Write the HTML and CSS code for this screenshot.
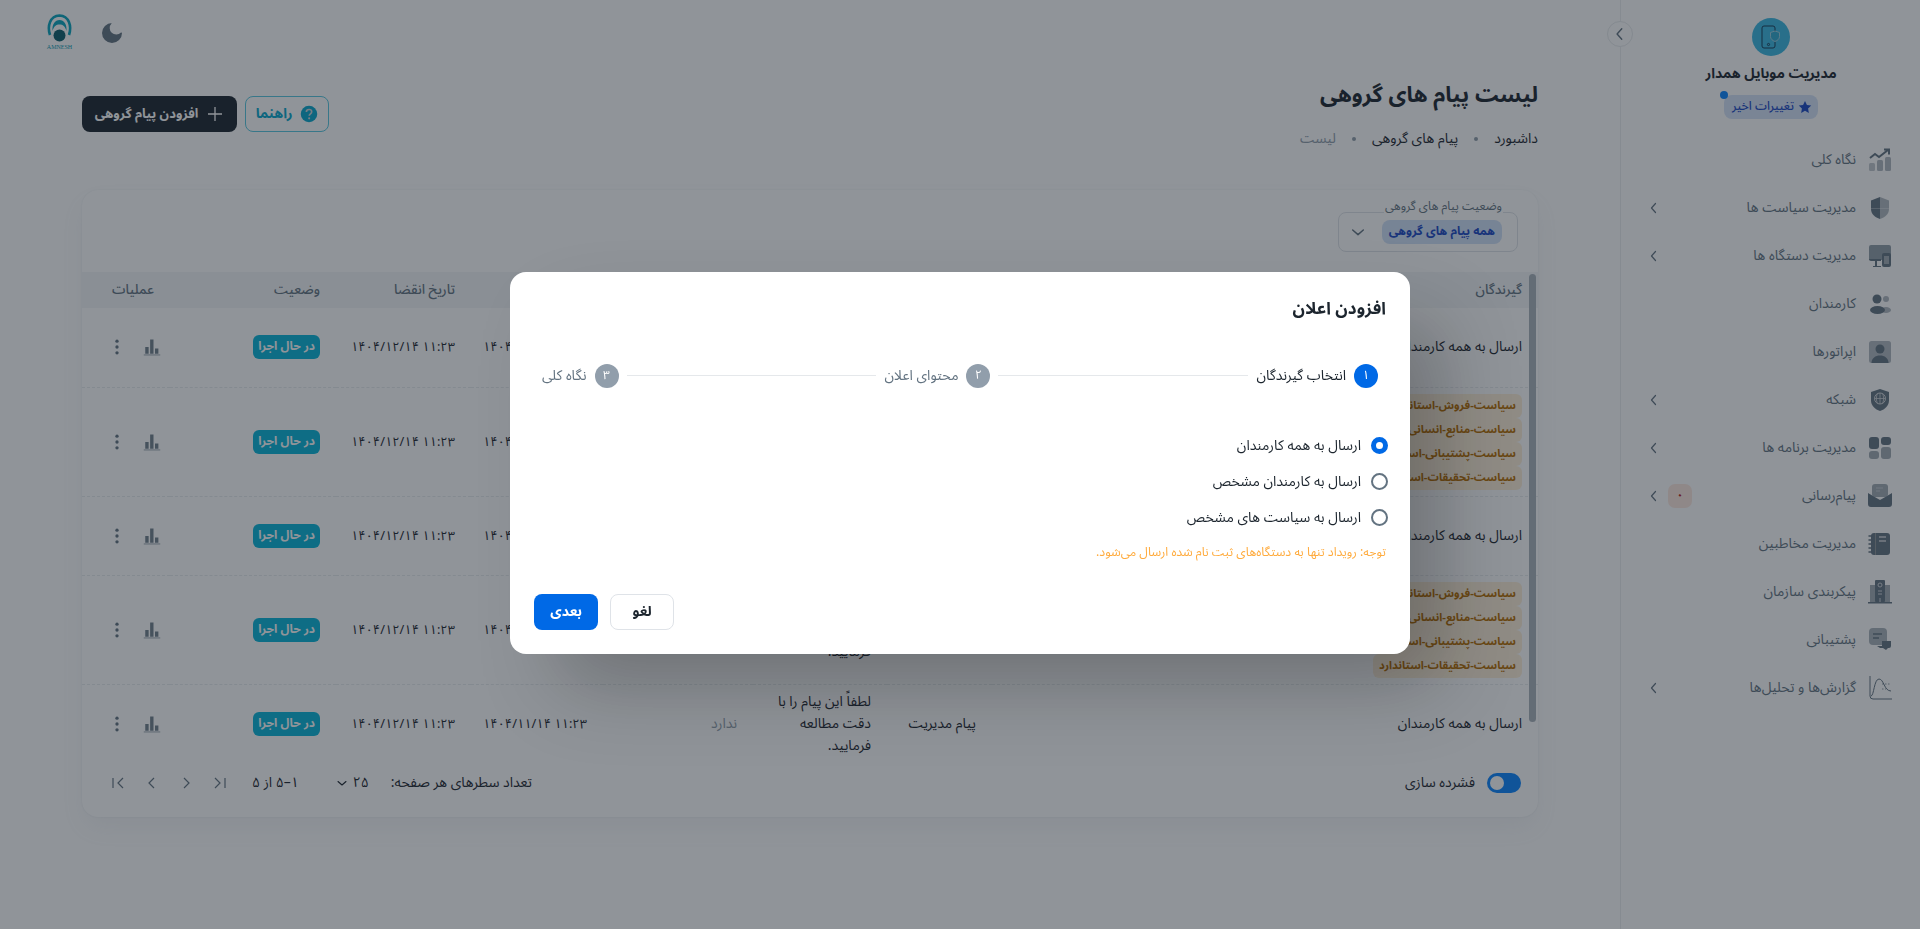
FILE: index.html
```html
<!DOCTYPE html>
<html lang="fa" dir="rtl">
<head>
<meta charset="utf-8">
<title>لیست پیام های گروهی</title>
<link rel="stylesheet" href="styles.css">
</head>
<body>
<svg class="sprite" width="0" height="0" aria-hidden="true">
  <symbol id="i-bars" viewBox="0 0 24 24"><path d="M3 21V12h4.500v9zM9.500 21V2h4.500v19zM16 21v-7h4.500v7z" fill="currentColor" opacity=".9"/><path d="M1 22h22v1.200H1z" fill="currentColor" opacity=".7"/></symbol>
  <symbol id="i-dots" viewBox="0 0 24 24"><circle cx="12" cy="5" r="2" fill="currentColor"/><circle cx="12" cy="12" r="2" fill="currentColor"/><circle cx="12" cy="19" r="2" fill="currentColor"/></symbol>
  <symbol id="i-left" viewBox="0 0 12 12"><path d="M7.500 1.500 3.500 6l4 4.500" fill="none" stroke="currentColor" stroke-width="1.200" stroke-linecap="round" stroke-linejoin="round"/></symbol>
  <symbol id="i-down" viewBox="0 0 12 12"><path d="M2 4.500 6 8l4-3.500" fill="none" stroke="currentColor" stroke-width="1.100" stroke-linecap="round" stroke-linejoin="round"/></symbol>
</svg>

<div class="app">
  <aside class="sidebar">
    <button class="collapse" type="button" aria-label="بستن"><svg width="14" height="14"><use href="#i-left"/></svg></button>
    <div class="brand">
      <div class="brand-icon">
        <svg width="24" height="24" viewBox="0 0 24 24" fill="none">
          <rect x="3" y="1" width="13" height="22" rx="2" stroke="#163b57" stroke-width="1"/>
          <circle cx="9.500" cy="19.500" r="1.100" stroke="#163b57"/>
          <path d="M16 6l4.500 1.500v4c0 2.500-2 4-4.500 5-2.500-1-4.500-2.500-4.500-5v-4z" fill="#2fa9d0" stroke="#9ccfe0" stroke-width="1"/>
        </svg>
      </div>
      <div class="brand-name">مدیریت موبایل همدار</div>
      <div class="brand-badge">
        <span class="brand-dot"></span>
        <svg width="14" height="14" viewBox="0 0 24 24"><path d="M12 1.500l3.300 6.900 7.400 1-5.400 5.200 1.300 7.500-6.600-3.600-6.600 3.600 1.300-7.500L1.300 9.400l7.400-1z" fill="currentColor"/></svg>
        <span>تغییرات اخیر</span>
      </div>
    </div>
    <nav class="menu">
      <a class="item"><svg class="ico" viewBox="0 0 24 24"><rect x="1" y="15" width="6" height="8" rx="1.500" fill="currentColor" opacity=".4"/><rect x="9" y="12" width="6" height="11" rx="1.500" fill="currentColor" opacity=".5"/><rect x="17" y="9" width="6" height="14" rx="1.500" fill="currentColor" opacity=".5"/><path d="M2 10l5-4 4 3 9-7M16 1.500h5v5" fill="none" stroke="currentColor" stroke-width="2"/></svg><span class="lbl">نگاه کلی</span></a>
      <a class="item"><svg class="ico" viewBox="0 0 24 24"><path d="M12 1 3 4.500V13c0 5 4 8.500 9 10z" fill="currentColor"/><path d="M12 1l9 3.500V13c0 5-4 8.500-9 10z" fill="currentColor" opacity=".5"/><path d="M3 12h18v1H3z" fill="#fff" opacity=".3"/></svg><span class="lbl">مدیریت سیاست ها</span><svg class="chev"><use href="#i-left"/></svg></a>
      <a class="item"><svg class="ico" viewBox="0 0 24 24"><path d="M3 1h18a2 2 0 0 1 2 2v9h-8v4H1V3a2 2 0 0 1 2-2z" fill="currentColor" opacity=".7"/><path d="M1 15h12v2H9v5h4v1H5v-1h2v-5H3a2 2 0 0 1-2-2z" fill="currentColor"/><rect x="14" y="9" width="9" height="14" rx="2" fill="currentColor"/><rect x="16" y="12" width="5" height="8" fill="#fff" opacity=".4"/></svg><span class="lbl">مدیریت دستگاه ها</span><svg class="chev"><use href="#i-left"/></svg></a>
      <a class="item"><svg class="ico" viewBox="0 0 24 24"><circle cx="9" cy="7" r="4.500" fill="currentColor"/><ellipse cx="9.500" cy="18" rx="7.500" ry="4" fill="currentColor"/><circle cx="18" cy="7" r="3" fill="currentColor" opacity=".5"/><ellipse cx="18" cy="18" rx="5" ry="3" fill="currentColor" opacity=".5"/></svg><span class="lbl">کارمندان</span></a>
      <a class="item"><svg class="ico" viewBox="0 0 24 24"><rect x="1" y="1" width="22" height="22" rx="2.500" fill="currentColor" opacity=".5"/><circle cx="12" cy="9" r="4.500" fill="currentColor"/><path d="M3.500 23c0-5 4-7.500 8.500-7.500s8.500 2.500 8.500 7.500z" fill="currentColor"/></svg><span class="lbl">اپراتورها</span></a>
      <a class="item"><svg class="ico" viewBox="0 0 24 24"><path d="M12 1l9 3v8.500c0 5-4 9-9 10.500-5-1.500-9-5.500-9-10.500V4z" fill="currentColor"/><circle cx="12" cy="10.500" r="5.500" fill="none" stroke="#cfd3d7" stroke-width="1"/><path d="M6.500 10.500h11M12 5v11M9.500 5.500c-1.500 3-1.500 7 0 10M14.500 5.500c1.500 3 1.500 7 0 10" fill="none" stroke="#cfd3d7" stroke-width=".8"/></svg><span class="lbl">شبکه</span><svg class="chev"><use href="#i-left"/></svg></a>
      <a class="item"><svg class="ico" viewBox="0 0 24 24"><rect x="1" y="1" width="10" height="12" rx="3" fill="currentColor"/><rect x="13" y="1" width="10" height="8" rx="3" fill="currentColor"/><rect x="1" y="15" width="10" height="8" rx="3" fill="currentColor" opacity=".6"/><rect x="13" y="11" width="10" height="12" rx="3" fill="currentColor" opacity=".6"/></svg><span class="lbl">مدیریت برنامه ها</span><svg class="chev"><use href="#i-left"/></svg></a>
      <a class="item"><svg class="ico" viewBox="0 0 24 24"><rect x="4" y="0" width="16" height="13" rx="3" fill="currentColor" opacity=".6"/><path d="M0 9l5 3v0l7 4 7-4 5-3v11a3 3 0 0 1-3 3H3a3 3 0 0 1-3-3z" fill="currentColor"/><path d="M8 4h7M8 7h4" stroke="#fff" stroke-opacity=".4"/></svg><span class="lbl">پیام‌رسانی</span><span class="count">۰</span><svg class="chev"><use href="#i-left"/></svg></a>
      <a class="item"><svg class="ico" viewBox="0 0 24 24"><rect x="3" y="1" width="19" height="22" rx="3" fill="currentColor"/><path d="M11 5h7M11 9h7" stroke="#cfd3d7" stroke-width="1.500"/><path d="M1 4h4M1 8h4M1 12h4M1 16h4M1 20h4" stroke="currentColor" stroke-width="1.500" stroke-linecap="round"/><path d="M7.500 1v22" stroke="#8f9498"/></svg><span class="lbl">مدیریت مخاطبین</span></a>
      <a class="item"><svg class="ico" viewBox="0 0 24 24"><rect x="7" y="0" width="10" height="22" rx="1" fill="currentColor"/><rect x="2" y="5" width="6" height="17" fill="currentColor" opacity=".6"/><rect x="16" y="5" width="6" height="17" fill="currentColor" opacity=".6"/><rect x="0" y="22" width="24" height="1.500" fill="currentColor"/><circle cx="12" cy="5" r="2" fill="none" stroke="#cfd3d7"/><path d="M10 11h4M10 14h4M12 18v4" stroke="#cfd3d7"/></svg><span class="lbl">پیکربندی سازمان</span></a>
      <a class="item"><svg class="ico" viewBox="0 0 24 24"><rect x="1" y="0" width="18" height="17" rx="4" fill="currentColor" opacity=".55"/><path d="M5 6h9M5 10h6" stroke="currentColor" stroke-width="1.600"/><path d="M14 13h9v5a2 2 0 0 1-2 2h-1l-2 2-3-2h-3l-3-2h5z" fill="currentColor"/></svg><span class="lbl">پشتیبانی</span></a>
      <a class="item"><svg class="ico" viewBox="0 0 24 24" fill="none"><path d="M2 0v20a3 3 0 0 0 3 3h19" stroke="currentColor" stroke-width="1"/><path d="M3 20c3 0 3-17 8-17s5 12 12 12" stroke="currentColor" stroke-width="1"/><path d="M14 8h9M14 13h4" stroke="currentColor" stroke-dasharray="1.500 1.500" opacity=".7"/></svg><span class="lbl">گزارش‌ها و تحلیل‌ها</span><svg class="chev"><use href="#i-left"/></svg></a>
    </nav>
  </aside>

  <main class="main">
    <header class="topbar">
      <div class="logo">
        <svg width="27" height="29" viewBox="0 0 27 29" fill="none">
          <path d="M4 21C1 12 4 2 13.500 1.500 23 2 26 12 23 21" stroke="#09a5bf" stroke-width="2.600"/>
          <path d="M6.500 17C6 10 9 6 13.500 6S21 10 20.500 17C19 12 17 10.500 13.500 10.500S8 12 6.500 17z" fill="#09a5bf"/>
          <circle cx="13.500" cy="21.500" r="6" fill="#0f5f6d"/>
        </svg>
        <span class="logo-text" dir="ltr">AMNESH</span>
      </div>
      <svg class="moon" width="24" height="24" viewBox="0 0 24 24"><path d="M12 2a10 10 0 1 0 10 10c0-.5-.6-.8-1-.5a6.500 6.500 0 0 1-9.500-9c.3-.4 0-.5-.5-.5z" fill="currentColor"/></svg>
    </header>

    <div class="page">
      <div class="page-head">
        <div class="heading">
          <h1 class="title">لیست پیام های گروهی</h1>
          <ol class="crumbs">
            <li>داشبورد</li><li class="sep"></li><li>پیام های گروهی</li><li class="sep"></li><li class="muted">لیست</li>
          </ol>
        </div>
        <div class="actions">
          <button class="btn-guide" type="button">
            <svg width="18" height="18" viewBox="0 0 24 24"><circle cx="12" cy="12" r="11" fill="currentColor"/><path d="M8.500 9.300c0-2 1.600-3.300 3.600-3.300s3.500 1.200 3.500 3c0 2.700-3.300 2.700-3.300 5.300" fill="none" stroke="#cfd3d7" stroke-width="2.200"/><circle cx="12.200" cy="17.800" r="1.400" fill="#cfd3d7"/></svg>
            <span>راهنما</span>
          </button>
          <button class="btn-add" type="button">
            <svg width="18" height="18" viewBox="0 0 18 18"><path d="M9 2v14M2 9h14" stroke="currentColor" stroke-width="1.300"/></svg>
            <span>افزودن پیام گروهی</span>
          </button>
        </div>
      </div>

      <section class="card">
        <div class="filter">
          <div class="field">
            <span class="legend">وضعیت پیام های گروهی</span>
            <span class="chip">همه پیام های گروهی</span>
            <svg class="field-chev" width="16" height="16"><use href="#i-down"/></svg>
          </div>
        </div>
        <div class="scrollbar"></div>
        <table class="table">
          <colgroup><col class="c1"><col class="c2"><col class="c3"><col class="c4"><col class="c5"><col class="c6"><col class="c7"><col class="c8"></colgroup>
          <thead>
            <tr><th>گیرندگان</th><th>عنوان</th><th>متن پیام</th><th>تکرار</th><th>تاریخ شروع <svg class="sort" width="12" height="12"><use href="#i-down"/></svg></th><th>تاریخ انقضا</th><th>وضعیت</th><th>عملیات</th></tr>
          </thead>
          <tbody>
            <tr><td>ارسال به همه کارمندان</td><td>پیام مدیریت</td><td class="msg">لطفاً این پیام را با دقت مطالعه فرمایید.</td><td class="muted">ندارد</td><td><span dir="ltr" class="date">۱۴۰۴/۱۱/۱۴ ۱۱:۲۳</span></td><td><span dir="ltr" class="date">۱۴۰۴/۱۲/۱۴ ۱۱:۲۳</span></td><td><span class="status">در حال اجرا</span></td><td class="ops"><span class="ops-in"><svg class="bar"><use href="#i-bars"/></svg><svg class="more"><use href="#i-dots"/></svg></span></td></tr>
            <tr><td><div class="tags"><span>سیاست-فروش-استاندارد</span><span>سیاست-منابع-انسانی-استاندارد</span><span>سیاست-پشتیبانی-استاندارد</span><span>سیاست-تحقیقات-استاندارد</span></div></td><td>پیام مدیریت</td><td class="msg">لطفاً این پیام را با دقت مطالعه فرمایید.</td><td class="muted">ندارد</td><td><span dir="ltr" class="date">۱۴۰۴/۱۱/۱۴ ۱۱:۲۳</span></td><td><span dir="ltr" class="date">۱۴۰۴/۱۲/۱۴ ۱۱:۲۳</span></td><td><span class="status">در حال اجرا</span></td><td class="ops"><span class="ops-in"><svg class="bar"><use href="#i-bars"/></svg><svg class="more"><use href="#i-dots"/></svg></span></td></tr>
            <tr><td>ارسال به همه کارمندان</td><td>پیام مدیریت</td><td class="msg">لطفاً این پیام را با دقت مطالعه فرمایید.</td><td class="muted">ندارد</td><td><span dir="ltr" class="date">۱۴۰۴/۱۱/۱۴ ۱۱:۲۳</span></td><td><span dir="ltr" class="date">۱۴۰۴/۱۲/۱۴ ۱۱:۲۳</span></td><td><span class="status">در حال اجرا</span></td><td class="ops"><span class="ops-in"><svg class="bar"><use href="#i-bars"/></svg><svg class="more"><use href="#i-dots"/></svg></span></td></tr>
            <tr><td><div class="tags"><span>سیاست-فروش-استاندارد</span><span>سیاست-منابع-انسانی-استاندارد</span><span>سیاست-پشتیبانی-استاندارد</span><span>سیاست-تحقیقات-استاندارد</span></div></td><td>پیام مدیریت</td><td class="msg">لطفاً این پیام را با دقت مطالعه فرمایید.</td><td class="muted">ندارد</td><td><span dir="ltr" class="date">۱۴۰۴/۱۱/۱۴ ۱۱:۲۳</span></td><td><span dir="ltr" class="date">۱۴۰۴/۱۲/۱۴ ۱۱:۲۳</span></td><td><span class="status">در حال اجرا</span></td><td class="ops"><span class="ops-in"><svg class="bar"><use href="#i-bars"/></svg><svg class="more"><use href="#i-dots"/></svg></span></td></tr>
            <tr><td>ارسال به همه کارمندان</td><td>پیام مدیریت</td><td class="msg">لطفاً این پیام را با دقت مطالعه فرمایید.</td><td class="muted">ندارد</td><td><span dir="ltr" class="date">۱۴۰۴/۱۱/۱۴ ۱۱:۲۳</span></td><td><span dir="ltr" class="date">۱۴۰۴/۱۲/۱۴ ۱۱:۲۳</span></td><td><span class="status">در حال اجرا</span></td><td class="ops"><span class="ops-in"><svg class="bar"><use href="#i-bars"/></svg><svg class="more"><use href="#i-dots"/></svg></span></td></tr>
          </tbody>
        </table>
        <footer class="card-foot">
          <div class="dense"><span class="switch"><span class="knob"></span></span><span>فشرده سازی</span></div>
          <div class="pager">
            <span>تعداد سطرهای هر صفحه:</span>
            <span class="per">۲۵<svg width="12" height="12"><use href="#i-down"/></svg></span>
            <span class="range">۱–۵ از ۵</span>
            <span class="nav">
              <svg width="16" height="16" viewBox="0 0 16 16"><path d="M13 3v10M3 3l5 5-5 5" fill="none" stroke="currentColor" stroke-width="1.200"/></svg>
              <svg width="16" height="16" viewBox="0 0 16 16"><path d="M6 3l5 5-5 5" fill="none" stroke="currentColor" stroke-width="1.200"/></svg>
              <svg width="16" height="16" viewBox="0 0 16 16"><path d="M10 3 5 8l5 5" fill="none" stroke="currentColor" stroke-width="1.200"/></svg>
              <svg width="16" height="16" viewBox="0 0 16 16"><path d="M3 3v10M13 3 8 8l5 5" fill="none" stroke="currentColor" stroke-width="1.200"/></svg>
            </span>
          </div>
        </footer>
      </section>
    </div>
  </main>
</div>

<div class="backdrop">
  <div class="modal" role="dialog" aria-modal="true">
    <h2 class="modal-title">افزودن اعلان</h2>
    <div class="stepper">
      <div class="step active"><span class="num">۱</span><span>انتخاب گیرندگان</span></div>
      <div class="line"></div>
      <div class="step"><span class="num">۲</span><span>محتوای اعلان</span></div>
      <div class="line"></div>
      <div class="step"><span class="num">۳</span><span>نگاه کلی</span></div>
    </div>
    <div class="radios">
      <div class="radio on"><span class="dot"></span><span>ارسال به همه کارمندان</span></div>
      <div class="radio"><span class="dot"></span><span>ارسال به کارمندان مشخص</span></div>
      <div class="radio"><span class="dot"></span><span>ارسال به سیاست های مشخص</span></div>
    </div>
    <p class="note">توجه: رویداد تنها به دستگاه‌های ثبت نام شده ارسال می‌شود.</p>
    <div class="modal-actions">
      <button class="btn-cancel" type="button">لغو</button>
      <button class="btn-next" type="button">بعدی</button>
    </div>
  </div>
</div>
</body>
</html>
```

FILE: styles.css
```css
* { box-sizing: border-box; }
html, body { height: 100%; }
body { margin: 0; overflow: hidden; background: #fff; color: #1c252e; font-family: "Noto Sans Arabic", "Vazirmatn", "Noto Sans", "DejaVu Sans", sans-serif; font-size: 14px; line-height: 22px; }
.sprite { position: absolute; }
button { font: inherit; cursor: pointer; }

.app { display: flex; height: 929px; }

.sidebar { width: 300px; flex: none; position: relative; border-left: 1px solid #eceef0; }
.collapse { position: absolute; top: 21px; left: -14px; width: 26px; height: 26px; padding: 0; border-radius: 50%; border: 1px solid #e8eaec; background: #fff; color: #637381; display: flex; align-items: center; justify-content: center; }
.collapse svg { width: 14px; height: 14px; }
.brand { display: flex; flex-direction: column; align-items: center; padding-top: 18px; margin-right: -1px; }
.brand-icon { width: 38px; height: 38px; border-radius: 50%; background: #3bb9e2; display: flex; align-items: center; justify-content: center; }
.brand-name { margin-top: 7px; font-size: 14px; font-weight: 700; line-height: 22px; white-space: nowrap; }
.brand-badge { position: relative; margin-top: 10px; height: 24px; padding: 0 6px 0 8px; display: flex; align-items: center; gap: 4px; border-radius: 8px; background: #d5e3f8; color: #1a48c4; font-size: 12px; font-weight: 500; }
.brand-dot { position: absolute; top: -4px; left: -4px; width: 8px; height: 8px; border-radius: 50%; background: #0a85ff; }

.menu { margin-top: 17px; display: flex; flex-direction: column; }
.item { height: 48px; display: flex; align-items: center; padding: 0 28px 0 27px; gap: 12px; color: #637381; }
.ico { width: 24px; height: 24px; flex: none; color: #637381; }
.lbl { flex: 1; }
.chev { width: 12px; height: 12px; flex: none; color: #637381; }
.count { width: 24px; height: 24px; margin-left: -4px; border-radius: 7px; background: #fde8df; color: #b71d18; display: flex; align-items: center; justify-content: center; font-size: 12px; font-weight: 700; }

.main { flex: 1; min-width: 0; }
.topbar { height: 68px; display: flex; padding: 14px 0 0 46px; gap: 27px; direction: ltr; }
.logo { width: 27px; display: flex; flex-direction: column; align-items: center; }
.logo-text { font-family: "Liberation Serif", serif; font-size: 6px; line-height: 6px; color: #0a9bb4; margin-top: 1px; }
.moon { color: #637381; margin-top: 7px; }

.page { padding: 0 82px; }
.page-head { display: flex; justify-content: space-between; align-items: flex-start; height: 122px; }
.title { margin: 9px 0 0; font-size: 22px; line-height: 36px; font-weight: 700; }
.crumbs { list-style: none; margin: 15px 0 0; padding: 0; display: flex; align-items: center; gap: 16px; }
.sep { width: 4px; height: 4px; border-radius: 50%; background: #919eab; }
.muted { color: #919eab; }
.actions { display: flex; gap: 8px; margin-top: 28px; }
.btn-guide, .btn-add { height: 36px; border-radius: 8px; display: flex; align-items: center; font-weight: 700; }
.btn-guide { width: 84px; justify-content: center; gap: 8px; background: transparent; border: 1px solid #57c8e0; color: #07a8cd; }
.btn-add { width: 155px; justify-content: center; gap: 8px; background: #1c252e; color: #fff; border: 0; font-size: 13px; }

.card { position: relative; height: 627px; border-radius: 16px; background: #fff; box-shadow: 0 0 2px rgba(145,158,171,.2), 0 12px 24px -4px rgba(145,158,171,.12); overflow: hidden; }
.filter { height: 82px; padding: 22px 20px 0; display: flex; }
.field { position: relative; width: 180px; height: 40px; border: 1px solid #dfe3e8; border-radius: 8px; padding: 7px 15px 0 0; }
.legend { position: absolute; top: -15px; right: 14px; padding: 0 1px; background: #fff; font-size: 12px; line-height: 18px; color: #637381; white-space: nowrap; }
.chip { display: inline-block; height: 24px; padding: 0 7px; border-radius: 8px; background: #cfe0f7; color: #1a48c4; font-size: 12px; font-weight: 700; line-height: 24px; }
.field-chev { position: absolute; left: 11px; top: 11px; color: #637381; }
.scrollbar { position: absolute; top: 84px; right: 2px; width: 7px; height: 448px; border-radius: 4px; background: #a9b2bb; z-index: 1; }

.table { width: 100%; table-layout: fixed; border-collapse: collapse; }
.c1 { width: 546px; } .c2 { width: 105px; } .c3 { width: 134px; } .c4 { width: 150px; } .c5 { width: 132px; } .c6 { width: 135px; } .c7 { width: 166px; } .c8 { width: 88px; }
.table th { height: 36px; padding: 0 16px; text-align: right; font-size: 13.500px; font-weight: 500; color: #637381; background: #f4f6f8; white-space: nowrap; }
.sort { vertical-align: middle; }
.table td { height: 79px; padding: 6px 16px; text-align: right; border-bottom: 1px dashed #e8ebee; vertical-align: middle; }
.table tbody tr:last-child td { border-bottom: 0; }
.table td.msg { padding-left: 10px; }
.date { white-space: nowrap; display: inline-block; font-size: 12.800px; }
.status { display: inline-block; height: 24px; padding: 0 5px; border-radius: 6px; background: #07b5d9; color: #fff; font-size: 12px; font-weight: 700; line-height: 24px; }
.tags { display: flex; flex-direction: column; align-items: flex-start; }
.tags span { height: 24px; padding: 0 6px; border-radius: 6px; background: #fff0d9; color: #b76e00; font-size: 11.200px; font-weight: 700; line-height: 24px; white-space: nowrap; }
.table td.ops { padding: 0 9px 0 0; }
.ops-in { display: flex; align-items: center; gap: 15px; }
.bar { width: 18px; height: 18px; color: #637381; }
.more { width: 20px; height: 20px; color: #637381; margin-right: 1px; }

.card-foot { display: flex; align-items: center; justify-content: space-between; height: 40px; padding: 0 17px 0 28px; }
.dense { display: flex; align-items: center; gap: 12px; color: #1c252e; }
.switch { width: 34px; height: 20px; border-radius: 10px; background: #0a85ff; padding: 3px; display: flex; justify-content: flex-end; }
.knob { width: 14px; height: 14px; border-radius: 50%; background: #fff; }
.pager { display: flex; align-items: center; }
.per { display: flex; align-items: center; gap: 5px; margin-right: 22px; font-size: 14px; }
.range { margin: 0 37px 0 0; }
.nav { display: flex; gap: 18px; margin-right: 24px; color: #637381; }

.backdrop { position: fixed; inset: 0; display: flex; align-items: center; justify-content: center; padding-bottom: 4px; background: rgba(22,32,41,.48); z-index: 10; }
.modal { width: 900px; height: 382px; padding: 0 24px; border-radius: 16px; background: #fff; box-shadow: 40px 40px 80px -8px rgba(0,0,0,.24); display: flex; flex-direction: column; }
.modal-title { margin: 23px 0 0; font-size: 17px; line-height: 28px; font-weight: 700; }
.stepper { display: flex; align-items: center; margin-top: 39px; padding: 0 8px; height: 28px; }
.step { display: flex; align-items: center; gap: 8px; color: #637381; }
.step.active { color: #1c252e; }
.num { width: 24px; height: 24px; border-radius: 50%; background: #919eab; color: #fff; display: flex; align-items: center; justify-content: center; font-size: 12px; }
.active .num { background: #0069e6; }
.line { flex: 1; height: 1px; margin: 0 8px; background: #e5e8eb; }
.radios { margin-top: 38px; display: flex; flex-direction: column; }
.radio { height: 36px; display: flex; align-items: center; gap: 10px; }
.dot { width: 17px; height: 17px; border-radius: 50%; border: 2px solid #637381; background: #fff; flex: none; margin-right: -2px; }
.radio.on .dot { border: 5px solid #0069e6; }
.note { margin: 7px 0 0; font-size: 12.300px; line-height: 18px; color: #ffab3d; }
.modal-actions { margin-top: auto; margin-bottom: 24px; display: flex; justify-content: flex-end; gap: 12px; }
.btn-cancel, .btn-next { height: 36px; border-radius: 8px; font-weight: 700; }
.btn-cancel { width: 64px; background: #fff; border: 1px solid #dfe3e8; color: #1c252e; }
.btn-next { width: 64px; background: #0069e6; border: 0; color: #fff; }
```
